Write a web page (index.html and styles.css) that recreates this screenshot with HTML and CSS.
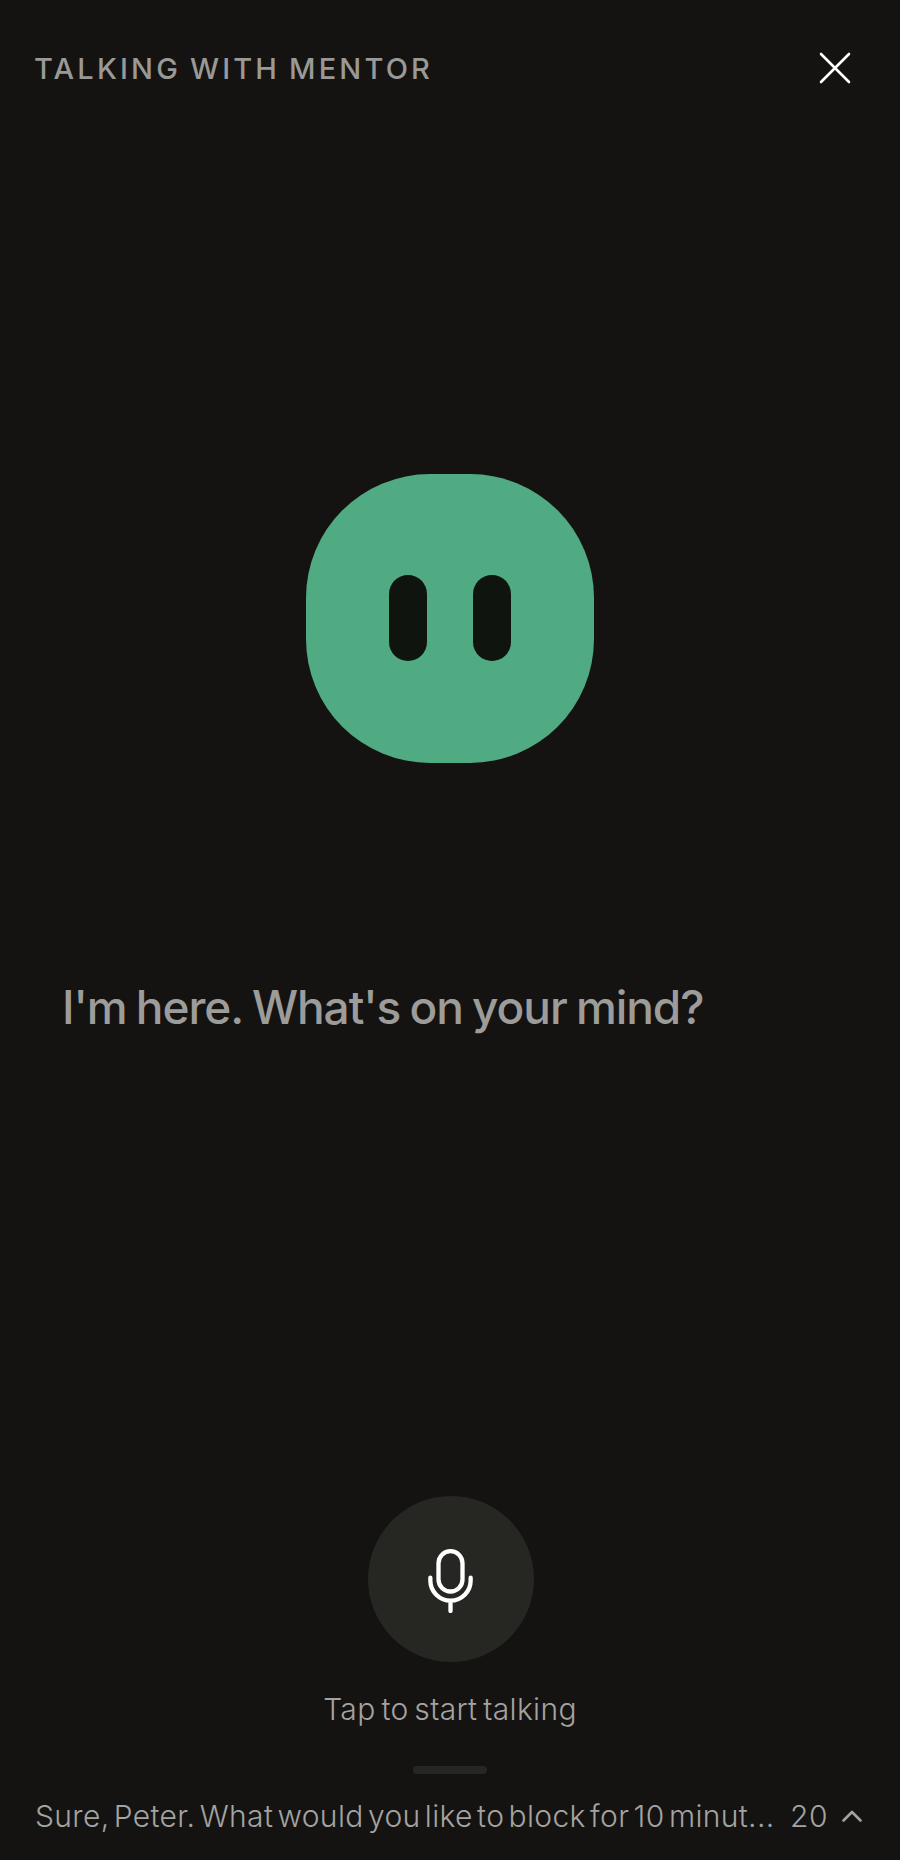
FILE: index.html
```html
<!DOCTYPE html>
<html lang="en">
<head>
<meta charset="utf-8">
<title>Talking with Mentor</title>
<link rel="stylesheet" href="styles.css">
</head>
<body>
<main class="screen">
  <header class="top">
    <h1 class="title">TALKING WITH MENTOR</h1>
    <svg class="close" viewBox="0 0 32 32" aria-label="Close"><path d="M2 2 30 30M30 2 2 30"/></svg>
  </header>
  <div class="avatar">
    <span class="eye"></span>
    <span class="eye"></span>
  </div>
  <p class="prompt">I'm here. What's on your mind?</p>
  <div class="spacer"></div>
  <div class="mic">
    <svg class="mic-icon" viewBox="0 0 48 68" aria-hidden="true">
      <rect x="11.2" y="2.2" width="25.6" height="43" rx="12.8"/>
      <path d="M2.5 30.5v3a21.500 21.500 0 0 0 43 0v-3M24 55v11"/>
    </svg>
  </div>
  <p class="hint">Tap to start talking</p>
  <div class="handle"></div>
  <footer class="bottom">
    <span class="last">Sure, Peter. What would you like to block for 10 minut...</span>
    <span class="count">20</span>
    <svg class="chevron" viewBox="0 0 20 12" aria-hidden="true"><path d="M1.500 10.500 10 2l8.500 8.500"/></svg>
  </footer>
</main>
</body>
</html>
```
FILE: styles.css
```css
* { box-sizing: border-box; }
html, body { margin: 0; padding: 0; background: #141312; }
body { font-family: "Inter", "Liberation Sans", sans-serif; }
.screen {
  width: 900px;
  height: 1860px;
  display: flex;
  flex-direction: column;
  align-items: center;
  overflow: hidden;
}
.top {
  width: 100%;
  height: 68px;
  margin-top: 34px;
  padding: 0 49px 0 34px;
  display: flex;
  align-items: center;
  justify-content: space-between;
}
.title {
  margin: 0;
  font-size: 29px;
  font-weight: 500;
  letter-spacing: 3.170px;
  word-spacing: -2px;
  color: #999997;
}
.close {
  width: 32px;
  height: 32px;
  fill: none;
  stroke: #fff;
  stroke-width: 2.600;
  stroke-linecap: round;
}
.avatar {
  width: 288px;
  height: 289px;
  margin-top: 372px;
  padding-bottom: 1px;
  border-radius: 124px;
  background: #50ab82;
  display: flex;
  align-items: center;
  justify-content: center;
  gap: 46px;
}
.eye {
  width: 38px;
  height: 86px;
  border-radius: 19px;
  background: #10140f;
}
.prompt {
  align-self: flex-start;
  margin: 216px 0 0 62px;
  font-size: 46px;
  line-height: 56px;
  font-weight: 500;
  letter-spacing: -1.050px;
  word-spacing: -2px;
  color: #9c9c9a;
  white-space: nowrap;
}
.spacer { flex: 1; }
.mic {
  width: 166px;
  height: 166px;
  margin-left: 2px;
  border-radius: 50%;
  background: #262623;
  display: flex;
  align-items: center;
  justify-content: center;
}
.mic-icon {
  width: 45px;
  height: 64px;
  margin: 3px 1px 0 0;
  fill: none;
  stroke: #fff;
  stroke-width: 4.600;
  stroke-linecap: round;
}
.hint {
  margin: 27px 0 0;
  font-size: 30px;
  line-height: 40px;
  font-weight: 300;
  letter-spacing: 0.350px;
  word-spacing: -3px;
  color: #a3a3a1;
}
.handle {
  width: 74px;
  height: 8px;
  margin-top: 37px;
  border-radius: 4px;
  background: #262624;
}
.bottom {
  width: 100%;
  height: 40px;
  margin: 22px 0 24px;
  padding: 0 35px;
  display: flex;
  align-items: center;
  font-size: 30px;
  font-weight: 300;
  line-height: 40px;
  letter-spacing: 0.350px;
  word-spacing: -4.500px;
  color: #a3a3a1;
}
.last { width: 755px; white-space: nowrap; overflow: hidden; }
.count { width: 52px; letter-spacing: 0.600px; }
.chevron {
  width: 20px;
  height: 12px;
  fill: none;
  stroke: #a3a3a1;
  stroke-width: 2.600;
  stroke-linecap: round;
  stroke-linejoin: round;
}
```
